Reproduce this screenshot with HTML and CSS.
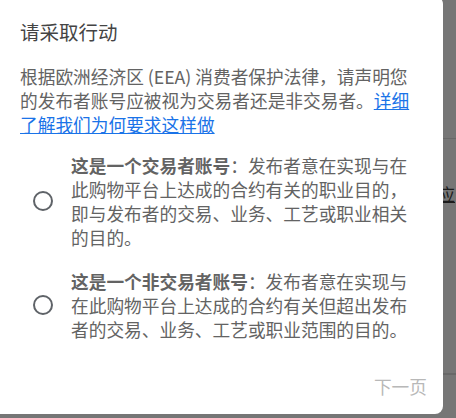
FILE: index.html
```html
<!DOCTYPE html>
<html lang="zh-CN">
<head>
<meta charset="utf-8">
<title>请采取行动</title>
<link rel="stylesheet" href="styles.css">
</head>
<body>
<div class="backdrop">
  <div class="bg-row bg-row-top"></div>
  <div class="bg-row bg-row-mid"><span class="bg-link">理应</span></div>
  <div class="bg-row bg-row-bottom"></div>
</div>
<div class="dialog" role="dialog" aria-labelledby="dlg-title">
  <h2 class="dialog-title" id="dlg-title">请采取行动</h2>
  <p class="dialog-text">根据欧洲经济区 (EEA) 消费者保护法律，请声明您的发布者账号应被视为交易者还是非交易者。<a class="dialog-link" href="#">详细了解我们为何要求这样做</a></p>
  <div class="options">
    <label class="option">
      <span class="radio"></span>
      <span class="option-text"><b class="option-label">这是一个交易者账号</b>：发布者意在实现与在此购物平台上达成的合约有关的职业目的，即与发布者的交易、业务、工艺或职业相关的目的。</span>
    </label>
    <label class="option">
      <span class="radio"></span>
      <span class="option-text"><b class="option-label">这是一个非交易者账号</b>：发布者意在实现与在此购物平台上达成的合约有关但超出发布者的交易、业务、工艺或职业范围的目的。</span>
    </label>
  </div>
  <div class="dialog-footer">
    <span class="next-btn">下一页</span>
  </div>
</div>
</body>
</html>
```
FILE: styles.css
```css
html, body {
  margin: 0;
  padding: 0;
}
body {
  width: 456px;
  height: 418px;
  overflow: hidden;
  position: relative;
  background: #767676;
  font-family: "Noto Sans CJK SC", "Noto Sans", sans-serif;
}
.backdrop {
  display: flex;
  flex-direction: column;
  padding-left: 421px;
}
.bg-row {
  border-bottom: 1px solid #686868;
  white-space: nowrap;
}
.bg-row-top {
  height: 138px;
}
.bg-row-mid {
  height: 235px;
  padding-top: 43px;
  box-sizing: border-box;
}
.bg-link {
  font-size: 17px;
  line-height: 22px;
  color: #1c1c1c;
  text-decoration: underline;
}
.dialog {
  position: absolute;
  left: -16px;
  top: -4px;
  width: 459px;
  height: 418px;
  box-sizing: border-box;
  background: #ffffff;
  border-radius: 8px;
  padding: 22px 0 0 36px;
  display: flex;
  flex-direction: column;
}
.dialog-title {
  margin: 0;
  font-size: 19.5px;
  font-weight: 400;
  line-height: 28px;
  color: #444444;
}
.dialog-text {
  margin: 18px 0 0;
  width: 396px;
  font-size: 17.7px;
  line-height: 24px;
  color: #636363;
}
.dialog-link {
  color: #1a73e8;
  text-decoration: underline;
}
.options {
  margin-top: 17px;
  display: flex;
  flex-direction: column;
  gap: 20px;
}
.option {
  display: flex;
  align-items: center;
  gap: 18px;
  padding-left: 13px;
}
.radio {
  flex: none;
  width: 20px;
  height: 20px;
  box-sizing: border-box;
  border: 2px solid #5f6368;
  border-radius: 50%;
}
.option-text {
  width: 342px;
  font-size: 17.7px;
  line-height: 24px;
  color: #636363;
}
.option-label {
  font-weight: 700;
}
.dialog-footer {
  margin-top: 33px;
  display: flex;
  justify-content: flex-end;
  padding-right: 16px;
}
.next-btn {
  font-size: 17.7px;
  line-height: 24px;
  color: #b8b8b8;
}
```
